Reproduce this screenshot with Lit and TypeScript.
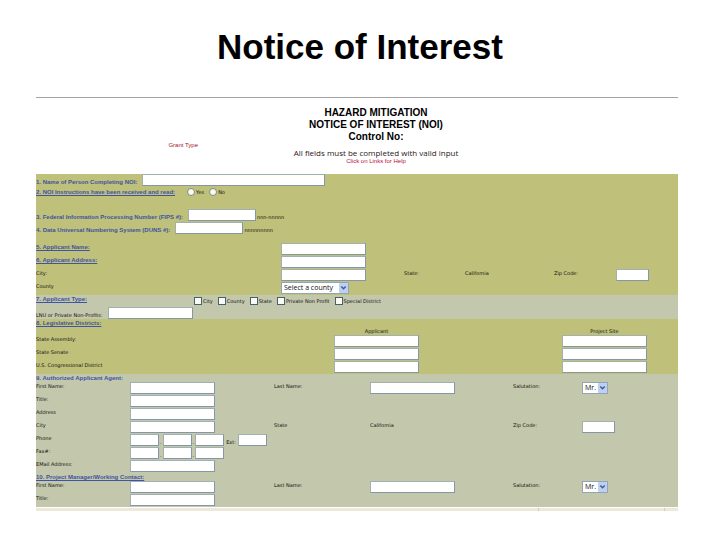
import { LitElement, html, css } from "lit";
import { customElement } from "lit/decorators.js";

@customElement("app-root")
export class AppRoot extends LitElement {
  static styles = css`
    :host {
      display: block;
      min-height: 100vh;
      background: #fff;
      color: #111;
      font-family: "Liberation Sans", Arial, sans-serif;
    }
    * {
      box-sizing: border-box;
    }
    .title {
      margin: 0;
      padding: 27px 0 30px;
      font-size: 35px;
      line-height: 40px;
      text-align: center;
      color: #000;
    }
    .sheet {
      margin: 0 42px 0 36px;
      border-top: 1px solid #a3a3a3;
      font-family: "DejaVu Sans", Verdana, sans-serif;
      font-size: 5px;
      line-height: 8px;
      white-space: nowrap;
    }
    .head {
      display: grid;
      grid-template-columns: 211fr 258fr 173fr;
      height: 76px;
      padding-top: 9px;
    }
    .grant {
      align-self: center;
      justify-self: end;
      margin: 8px 49px 0 0;
      color: #a8122a;
      font: 6px/8px "Liberation Sans", sans-serif;
    }
    .center {
      text-align: center;
    }
    .head h2 {
      margin: 0 0 5px;
      font: bold 10px/12px "Liberation Sans", sans-serif;
      color: #000;
    }
    .valid {
      margin: 0;
      font: 8px/9px "Open Sans", sans-serif;
      color: #2b1718;
    }
    .help {
      margin: 0;
      color: #b8103c;
      font: 6px/8px "Liberation Sans", sans-serif;
    }
    .olive {
      background: #bfc079;
    }
    .grey {
      background: #c3c7ab;
    }
    .row {
      display: flex;
      align-items: flex-end;
      height: 13px;
      gap: 5px;
    }
    .row.tight {
      height: 12px;
    }
    .row.choices {
      align-items: center;
      height: 12px;
      gap: 12px;
    }
    .coded {
      display: flex;
      align-items: flex-end;
      gap: 1px;
    }
    .intro {
      padding-bottom: 9px;
    }
    .spaced {
      margin-bottom: 10px;
    }
    .grid {
      display: grid;
      grid-auto-rows: 13px;
      align-items: start;
    }
    .applicant {
      grid-template-columns: 245fr 123fr 61fr 89fr 62fr 62fr;
    }
    .districts {
      grid-template-columns: 298fr 228fr 116fr;
      grid-template-rows: 16px;
    }
    .contact {
      grid-template-columns: 94fr 144fr 96fr 143fr 69fr 96fr;
    }
    .first {
      grid-column: 1;
    }
    .bar {
      height: 8px;
    }
    .bar a {
      display: block;
      width: max-content;
    }
    .type {
      display: grid;
      grid-template-columns: 158fr 484fr;
      height: 12px;
    }
    .options {
      display: flex;
      align-items: center;
      gap: 5px;
    }
    a {
      display: inline-block;
      color: #4054a4;
      font: bold 6px/8px "Liberation Sans", sans-serif;
      text-decoration: underline;
      vertical-align: top;
    }
    .plain {
      text-decoration: none;
    }
    .colhead {
      width: 85px;
      align-self: end;
      text-align: center;
    }
    input,
    select {
      margin: 0;
      border-radius: 0;
      font-family: "Open Sans", sans-serif;
    }
    .box {
      display: block;
      width: 85px;
      height: 12px;
      padding: 0 1px;
      border: 1px solid #8397a8;
      border-top-color: #a3b0b0;
      border-left-color: #a3b0b0;
      background: #fff;
      font-size: 7px;
    }
    .box.name {
      width: 183px;
    }
    .box.code {
      width: 68px;
    }
    .box.zip {
      width: 33px;
    }
    .box.part {
      width: 29px;
    }
    .phone {
      display: flex;
      align-items: flex-end;
      height: 12px;
      gap: 1px;
    }
    .phone .ext {
      padding: 0 1px;
    }
    .opt {
      display: flex;
      align-items: center;
      gap: 1px;
    }
    .mark {
      appearance: none;
      width: 8px;
      height: 8px;
      border: 1px solid #45626e;
      background: #fafaf4;
    }
    .mark.round {
      border-radius: 50%;
      border-color: #7d8a83;
    }
    .mark:checked {
      background: #45626e;
    }
    .pick {
      display: grid;
      grid-template-columns: 1fr 10px;
      width: 68px;
      height: 12px;
    }
    .pick.short {
      width: 26px;
    }
    .pick select {
      grid-area: 1 / 1 / 2 / 3;
      appearance: none;
      width: 100%;
      height: 12px;
      padding: 0 0 0 2px;
      border: 1px solid #93a5b4;
      background: #fff;
      color: #111;
      font-size: 7px;
      line-height: 10px;
    }
    .pick svg {
      grid-area: 1 / 2;
      z-index: 1;
      width: 9px;
      height: 10px;
      margin-top: 1px;
      pointer-events: none;
    }
    .status {
      display: grid;
      grid-template-columns: 503fr 126fr 13fr;
      height: 4px;
      border-top: 1px solid #fff;
      background: #ece9dc;
    }
    .status span {
      border-right: 1px solid #cfccbd;
    }
  `;

  private box(id: string, kind = "") {
    return html`<input class="box ${kind}" id=${id} type="text" />`;
  }

  private label(id: string, text: string, cls = "") {
    return html`<label class=${cls} for=${id}>${text}</label>`;
  }

  private linked(id: string, text: string, cls = "first", link = "") {
    return html`<label class=${cls} for=${id}><a class=${link} href="#${id}">${text}</a></label>`;
  }

  private pick(id: string, option: string, cls = "") {
    return html`<span class="pick ${cls}">
      <select id=${id}><option>${option}</option></select>
      <svg viewBox="0 0 9 10" aria-hidden="true">
        <rect width="9" height="10" rx="1" fill="#bdd0f3" />
        <path d="M2.3 3.6 4.5 5.8 6.7 3.6" fill="none" stroke="#42598c" stroke-width="1.4" />
      </svg>
    </span>`;
  }

  private person(p: string) {
    return html`
      ${this.label(p + "-first", "First Name:", "first")} ${this.box(p + "-first")}
      ${this.label(p + "-last", "Last Name:")} ${this.box(p + "-last")}
      ${this.label(p + "-sal", "Salutation:")} ${this.pick(p + "-sal", "Mr.", "short")}
      ${this.label(p + "-title", "Title:", "first")} ${this.box(p + "-title")}
    `;
  }

  private phone(id: string, ext: boolean) {
    return html`<span class="phone">
      ${this.box(id, "part")}<span>.</span>${this.box(id + "-2", "part")}<span>.</span>${this.box(id + "-3", "part")}
      ${ext ? html`<label class="ext" for="${id}-ext">Ext:</label>${this.box(id + "-ext", "part")}` : ""}
    </span>`;
  }

  render() {
    return html`
      <h1 class="title">Notice of Interest</h1>
      <form class="sheet">
        <header class="head">
          <span class="grant">Grant Type</span>
          <div class="center">
            <h2>HAZARD MITIGATION<br />NOTICE OF INTEREST (NOI)<br />Control No:</h2>
            <p class="valid">All fields must be completed with valid input</p>
            <p class="help">Click on Links for Help</p>
          </div>
        </header>

        <section class="olive">
          <div class="intro">
            <div class="row tight">
              ${this.linked("person", "1. Name of Person Completing NOI:", "", "plain")} ${this.box("person", "name")}
            </div>
            <div class="row choices spaced">
              <a href="#read">2. NOI Instructions have been received and read:</a>
              <span class="options" id="read">
                <label class="opt"><input class="mark round" type="radio" name="read" />Yes</label>
                <label class="opt"><input class="mark round" type="radio" name="read" />No</label>
              </span>
            </div>
            <div class="row">
              ${this.linked("fips", "3. Federal Information Processing Number (FIPS #):", "", "plain")}
              <span class="coded">${this.box("fips", "code")}<span>nnn-nnnnn</span></span>
            </div>
            <div class="row">
              ${this.linked("duns", "4. Data Universal Numbering System (DUNS #):", "", "plain")}
              <span class="coded">${this.box("duns", "code")}<span>nnnnnnnnn</span></span>
            </div>
          </div>
          <div class="grid applicant">
            ${this.linked("name", "5. Applicant Name:")} ${this.box("name")}
            ${this.linked("address", "6. Applicant Address:")} ${this.box("address")}
            ${this.label("city", "City:", "first")} ${this.box("city")}
            <span>State:</span><span>California</span>
            ${this.label("zip", "Zip Code:")} ${this.box("zip", "zip")}
            ${this.label("county", "County", "first")} ${this.pick("county", "Select a county")}
          </div>
        </section>

        <section class="grey">
          <div class="type">
            <span><a href="#npo">7. Applicant Type:</a></span>
            <span class="options">
              ${["City", "County", "State", "Private Non Profit", "Special District"].map(
                (t) => html`<label class="opt"><input class="mark" type="checkbox" />${t}</label>`
              )}
            </span>
          </div>
          <div class="row tight">${this.label("npo", "LNU or Private Non-Profits:")} ${this.box("npo")}</div>
        </section>

        <section class="olive grid districts">
          <span class="first"><a href="#d0">8. Legislative Districts:</a></span>
          <span class="colhead">Applicant</span><span class="colhead">Project Site</span>
          ${["State Assembly:", "State Senate", "U.S. Congressional District"].map(
            (t, i) => html`${this.label("d" + i, t, "first")} ${this.box("d" + i)} ${this.box("site" + i)}`
          )}
        </section>

        <section class="grey">
          <div class="bar"><a class="plain" href="#agent-first">9. Authorized Applicant Agent:</a></div>
          <div class="grid contact">
            ${this.person("agent")}
            ${this.label("a-addr", "Address", "first")} ${this.box("a-addr")}
            ${this.label("a-city", "City", "first")} ${this.box("a-city")}
            <span>State</span><span>California</span>
            ${this.label("a-zip", "Zip Code:")} ${this.box("a-zip", "zip")}
            ${this.label("a-phone", "Phone", "first")} ${this.phone("a-phone", true)}
            ${this.label("a-fax", "Fax#:", "first")} ${this.phone("a-fax", false)}
            ${this.label("a-mail", "EMail Address:", "first")} ${this.box("a-mail")}
          </div>
          <div class="bar"><a href="#manager-first">10. Project Manager/Working Contact:</a></div>
          <div class="grid contact">${this.person("manager")}</div>
        </section>
        <div class="status"><span></span><span></span></div>
      </form>
    `;
  }
}
